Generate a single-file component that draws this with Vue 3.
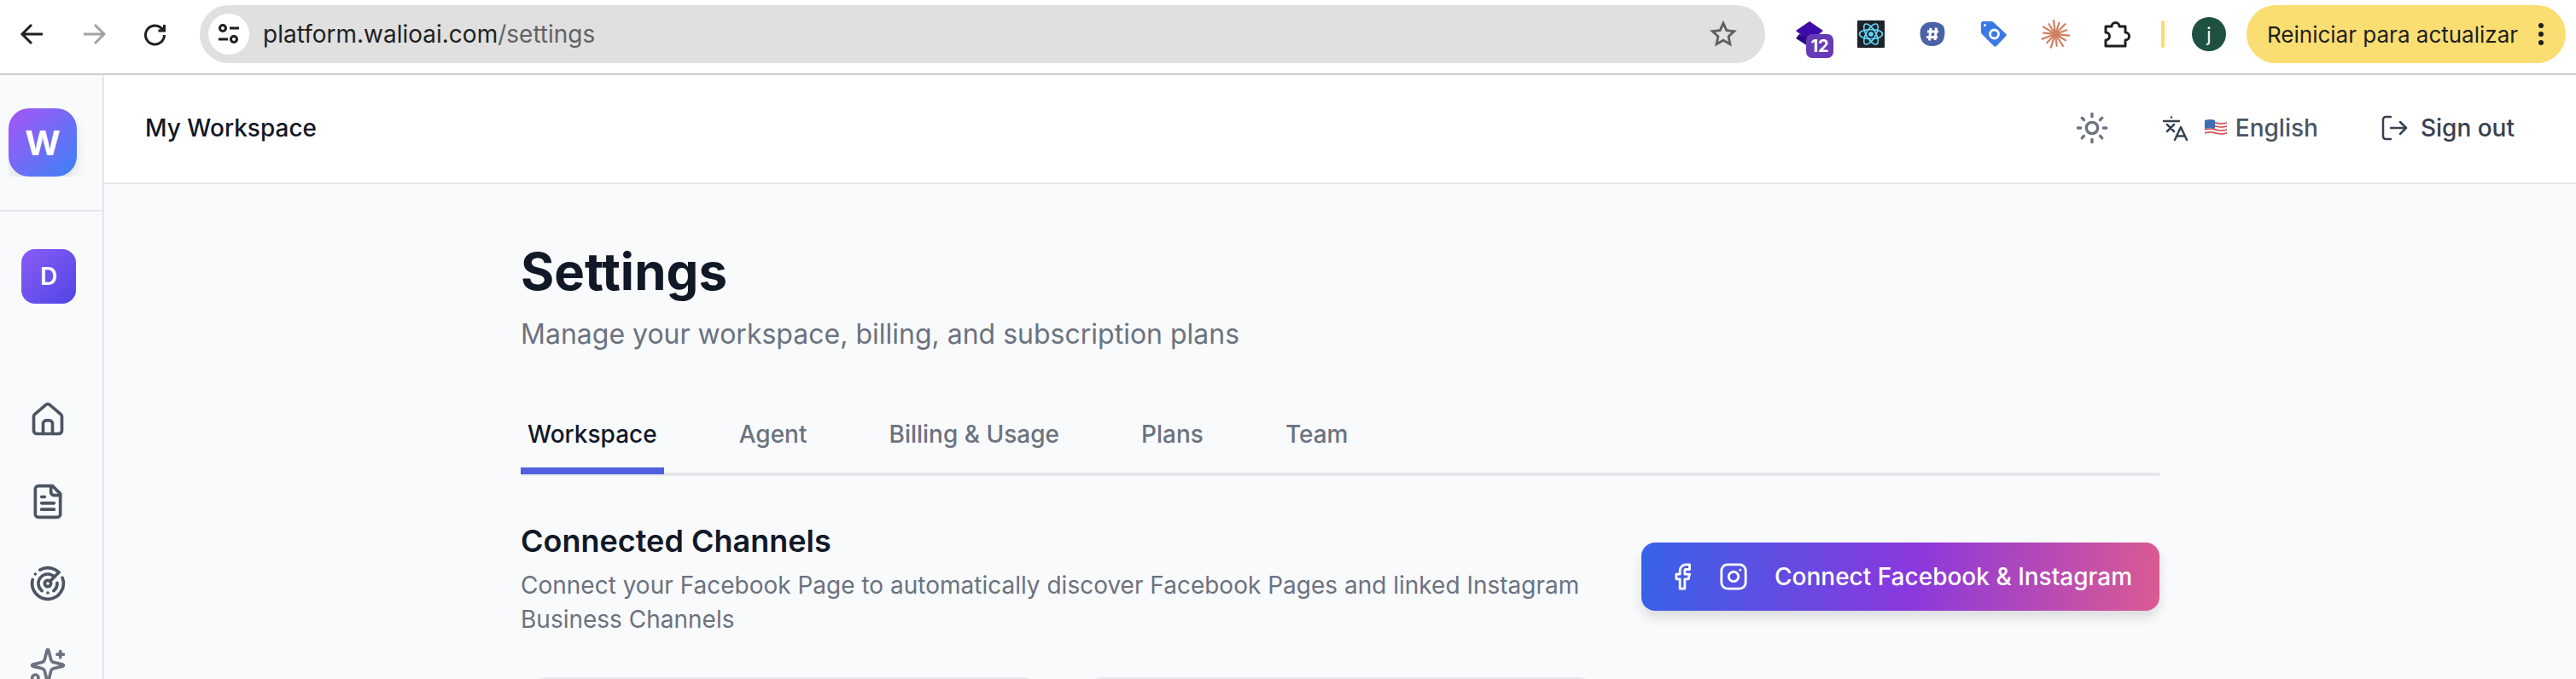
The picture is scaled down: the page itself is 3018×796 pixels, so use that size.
<template>
  <div class="page">
    <div class="chrome">
      <svg class="nav" width="32" height="32" viewBox="0 0 32 32"><path d="M28 16H5M15 5 4 16l11 11" /></svg>
      <svg class="nav off" width="32" height="32" viewBox="0 0 32 32"><path d="M4 16h23M17 5l11 11-11 11" /></svg>
      <svg class="nav" width="32" height="32" viewBox="0 0 32 32"><path d="M26.500 17a11 11 0 1 1-4-8.500l4 3.500M26.500 5v7h-7" /></svg>

      <div class="omnibox">
        <span class="tune">
          <svg width="28" height="28" viewBox="0 0 28 28"><circle cx="7" cy="7" r="3.500" /><path d="M15 7h11M2 20h11" /><circle cx="20" cy="20" r="3.500" /></svg>
        </span>
        <span class="url">platform.walioai.com<span class="url-path">/settings</span></span>
        <svg class="star" width="34" height="34" viewBox="0 0 24 24"><path d="m12 3 2.700 5.900 6.300.7-4.700 4.300 1.300 6.400-5.600-3.200-5.600 3.200 1.300-6.400L3 9.600l6.300-.7z" /></svg>
      </div>

      <div class="exts">
        <div class="ext">
          <svg width="36" height="30" viewBox="0 0 36 30"><path d="M18 0 34 11 18 24 2 11z" fill="#3f0ba8" /><path d="M6 15 2 20l14 9 8-6z" fill="#2a0a86" /></svg>
          <span class="ext-badge">12</span>
        </div>
        <div class="ext">
          <svg width="32" height="32" viewBox="0 0 32 32">
            <rect width="32" height="32" rx="1" fill="#20232a" />
            <g fill="none" stroke="#61dafb" stroke-width="1.600">
              <ellipse cx="16" cy="16" rx="13.500" ry="5.500" />
              <ellipse cx="16" cy="16" rx="13.500" ry="5.500" transform="rotate(60 16 16)" />
              <ellipse cx="16" cy="16" rx="13.500" ry="5.500" transform="rotate(120 16 16)" />
            </g>
            <circle cx="16" cy="16" r="2.800" fill="#61dafb" />
          </svg>
        </div>
        <div class="ext">
          <svg width="30" height="30" viewBox="0 0 30 30">
            <path d="M9 1.500C15 -.5 25 1 28 6c2.500 5 1.500 14-1.500 18-4 5-12 6-18 4C3 26 .5 20 .5 14 .5 8 3 3.500 9 1.500z" fill="#4a62a6" />
            <path d="M9 12h13M8 18.500h13M13 8l-1.500 14.500M19.500 7.500 18 22" fill="none" stroke="#fff" stroke-width="3" />
          </svg>
        </div>
        <div class="ext">
          <svg width="30" height="30" viewBox="0 0 30 30">
            <path d="M2 0h10c1 0 2 .5 3 1.500l14 13c1 1 1 2 0 3L18 29c-1 1-2 1-3 0L1 15c-.7-.7-1-1.500-1-2.500V2C0 1 1 0 2 0z" fill="#3b78e7" />
            <circle cx="4.500" cy="4.500" r="1.500" fill="#fff" />
            <circle cx="15.500" cy="15" r="5" fill="none" stroke="#fff" stroke-width="2.800" />
          </svg>
        </div>
        <div class="ext">
          <svg width="34" height="34" viewBox="-17 -17 34 34">
            <line v-for="ray in burstRays" :key="ray.id" :x1="ray.x1" :y1="ray.y1" :x2="ray.x2" :y2="ray.y2" stroke="#d07f60" stroke-width="2.200" stroke-linecap="round" />
            <circle r="4.500" fill="#d07f60" />
          </svg>
        </div>
        <div class="ext">
          <svg width="34" height="34" viewBox="0 0 34 34"><path d="M4 8h7a4.500 4.500 0 0 1 9 0h7v7a4.500 4.500 0 0 1 0 9v7H4v-7a4.500 4.500 0 0 0 0-9z" fill="none" stroke="#1f1f1f" stroke-width="3" stroke-linejoin="round" /></svg>
        </div>
      </div>
      <span class="ext-sep"></span>
      <span class="avatar">j</span>
      <div class="update">
        <span>Reiniciar para actualizar</span>
        <span class="dots"><i></i><i></i><i></i></span>
      </div>
    </div>

    <div class="app">
      <aside class="sidebar">
        <div class="side-top">
          <div class="logo-clip"><div class="logo">W</div></div>
        </div>
        <div class="workspace-badge">D</div>
        <nav class="side-nav">
          <svg viewBox="0 0 24 24"><path d="M3 10a2 2 0 0 1 .7-1.500l7-6a2 2 0 0 1 2.600 0l7 6A2 2 0 0 1 21 10v9a2 2 0 0 1-2 2H5a2 2 0 0 1-2-2z" /><path d="M15 21v-6.500a2 2 0 0 0-2-2h-2a2 2 0 0 0-2 2V21" /></svg>
          <svg viewBox="0 0 24 24"><path d="M15 2H6a2 2 0 0 0-2 2v16a2 2 0 0 0 2 2h12a2 2 0 0 0 2-2V7Z" /><path d="M14 2v4a2 2 0 0 0 2 2h4M10 9H8M16 13H8M16 17H8" /></svg>
          <svg viewBox="0 0 24 24"><path d="M19.070 4.930A10 10 0 0 0 6.990 3.340M4 6h.01M2.290 9.620A10 10 0 1 0 21.310 8.350M16.240 7.760A6 6 0 1 0 8.230 16.670M12 18h.01M17.990 11.660A6 6 0 0 1 15.770 16.670" /><circle cx="12" cy="12" r="2" /><path d="m13.410 10.590 5.660-5.660" /></svg>
          <svg class="soft" viewBox="0 0 24 24"><path d="M9.937 15.500A2 2 0 0 0 8.500 14.063l-6.135-1.582a.5.5 0 0 1 0-.962L8.500 9.936A2 2 0 0 0 9.937 8.500l1.582-6.135a.5.5 0 0 1 .963 0L14.063 8.500A2 2 0 0 0 15.500 9.937l6.135 1.581a.5.5 0 0 1 0 .964L15.500 14.063a2 2 0 0 0-1.437 1.437l-1.582 6.135a.5.5 0 0 1-.963 0z" /><path d="M20 3v4M22 5h-4" /><circle cx="4" cy="20" r="2" /></svg>
        </nav>
      </aside>

      <main class="main">
        <header class="topbar">
          <span class="ws-name">My Workspace</span>
          <div class="top-actions">
            <svg class="sun" width="40" height="40" viewBox="0 0 24 24"><circle cx="12" cy="12" r="4" /><path d="M12 2v2M12 20v2M4.900 4.900l1.400 1.400M17.700 17.700l1.400 1.400M2 12h2M20 12h2M6.300 17.700l-1.400 1.400M19.100 4.900l-1.400 1.400" /></svg>
            <div class="lang">
              <svg width="32" height="32" viewBox="0 0 32 32"><path d="M2 8h18M11 3.500h.01M6 12l8 8M14 12l-8 8M15 30l7-15 7 15M17.500 25.500h9" /></svg>
              <svg class="flag" width="26" height="20" viewBox="0 0 26 20">
                <path d="M0 1q6-2 13 0t13 0v17q-6 2-13 0t-13 0z" fill="#f4f4f4" />
                <path v-for="y in flagStripes" :key="y" :d="`M0 ${y}q6-2 13 0t13 0`" fill="none" stroke="#d8474a" stroke-width="1.500" />
                <path d="M0 1q6-2 12 0v10q-6-1.500-12 0z" fill="#3f6db5" />
              </svg>
              <span>English</span>
            </div>
            <div class="signout">
              <svg width="32" height="32" viewBox="0 0 32 32"><path d="M12 3H6a3 3 0 0 0-3 3v20a3 3 0 0 0 3 3h6M12 16h18M23 9l7 7-7 7" /></svg>
              <span>Sign out</span>
            </div>
          </div>
        </header>

        <div class="content">
          <h1>Settings</h1>
          <p class="sub">Manage your workspace, billing, and subscription plans</p>
          <div class="tabs">
            <span v-for="tab in tabs" :key="tab" class="tab" :class="{ active: tab === 'Workspace' }">{{ tab }}</span>
          </div>
          <section class="channels-head">
            <div class="channels-text">
              <h2>Connected Channels</h2>
              <p>Connect your Facebook Page to automatically discover Facebook Pages and linked Instagram Business Channels</p>
            </div>
            <button class="connect">
              <svg class="fb" width="34" height="34" viewBox="0 0 24 24"><path d="M18 2h-3a5 5 0 0 0-5 5v3H7v4h3v8h4v-8h3l1-4h-4V7a1 1 0 0 1 1-1h3z" /></svg>
              <svg width="34" height="34" viewBox="0 0 24 24"><rect x="2" y="2" width="20" height="20" rx="5" /><path d="M16 11.370A4 4 0 1 1 12.630 8 4 4 0 0 1 16 11.370zM17.500 6.500h.01" /></svg>
              <span>Connect Facebook &amp; Instagram</span>
            </button>
          </section>
          <div class="cards">
            <div class="card"></div>
            <div class="card"></div>
          </div>
        </div>
      </main>
    </div>
  </div>
</template>

<script setup>
const tabs = ['Workspace', 'Agent', 'Billing & Usage', 'Plans', 'Team']
const flagStripes = [4, 8, 12, 16]

const burstRays = Array.from({ length: 14 }, (_, i) => {
  const a = (i / 14) * Math.PI * 2 + 0.1
  const len = i % 2 ? 14 : 16.5
  return {
    id: i,
    x1: +(Math.cos(a) * 3).toFixed(2),
    y1: +(Math.sin(a) * 3).toFixed(2),
    x2: +(Math.cos(a) * len).toFixed(2),
    y2: +(Math.sin(a) * len).toFixed(2),
  }
})
</script>

<style>
html, body { margin: 0; background: #f9fafb; overflow: hidden; }
</style>

<style scoped>
* { box-sizing: border-box; }
.page { width: 3018px; height: 796px; overflow: hidden; font-family: Inter, "Liberation Sans", sans-serif; color: #111827; }

/* browser toolbar */
.chrome { height: 88px; background: #fff; border-bottom: 2px solid #cdcdcd; display: flex; align-items: center; padding: 0 12px 6px 22px; }
.nav { flex: none; margin-right: 40px; fill: none; stroke: #1f1f1f; stroke-width: 3; }
.nav.off { stroke: #a3a3a3; }
.omnibox { width: 1834px; height: 68px; margin-left: -4px; flex: none; background: #e0e0e0; border-radius: 34px; display: flex; align-items: center; padding: 0 32px 0 10px; }
.tune { width: 48px; height: 48px; border-radius: 50%; background: #fff; display: flex; align-items: center; justify-content: center; }
.tune svg { fill: none; stroke: #1f1f1f; stroke-width: 3; }
.url { margin-left: 16px; font-size: 28px; color: #1f1f1f; flex: 1; }
.url-path { color: #5f6368; }
.star { fill: none; stroke: #5f5f5f; stroke-width: 2; }
.exts { display: flex; margin-left: 16px; }
.ext { width: 72px; height: 72px; display: flex; align-items: center; justify-content: center; position: relative; }
.ext-badge { position: absolute; left: 32px; top: 36px; width: 32px; height: 28px; border-radius: 7px; background: #673ab7; color: #fff; font-size: 20px; font-weight: 700; display: flex; align-items: center; justify-content: center; }
.ext-sep { width: 4px; height: 32px; border-radius: 2px; background: #fbdc6c; margin-left: 16px; flex: none; }
.avatar { width: 40px; height: 40px; border-radius: 50%; background: #1e5142; color: #fff; font-size: 22px; display: flex; align-items: center; justify-content: center; margin-left: 32px; flex: none; }
.update { width: 374px; height: 68px; margin-left: 24px; flex: none; border-radius: 34px; background: #fade72; display: flex; align-items: center; padding-left: 24px; font-size: 26px; color: #1f1f1f; }
.dots { display: flex; flex-direction: column; gap: 4px; margin-left: 24px; }
.dots i { width: 6px; height: 6px; border-radius: 50%; background: #1f1f1f; }

.app { display: flex; height: 708px; }

/* left rail */
.sidebar { width: 122px; flex: none; background: #f9fafb; border-right: 2px solid #e5e7eb; }
.side-top { height: 160px; border-bottom: 2px solid #e5e7eb; padding: 39px 0 0 10px; }
.logo-clip { width: 94px; height: 80px; overflow: hidden; }
.logo { width: 80px; height: 80px; border-radius: 24px; background: linear-gradient(135deg, #a855f7, #3b82f6); color: #fff; font-size: 40px; font-weight: 700; display: flex; align-items: center; justify-content: center; box-shadow: 0 8px 14px rgba(0, 0, 0, .1); }
.workspace-badge { width: 64px; height: 64px; margin: 44px 0 0 25px; border-radius: 16px; background: linear-gradient(135deg, #8b5cf6, #4f46e5); color: #fff; font-size: 28px; font-weight: 600; display: flex; align-items: center; justify-content: center; }
.side-nav { display: flex; flex-direction: column; align-items: center; gap: 52px; margin-top: 114px; padding-right: 8px; }
.side-nav svg { width: 44px; height: 44px; flex: none; fill: none; stroke: #4b5563; stroke-width: 2; stroke-linecap: round; stroke-linejoin: round; }
.side-nav svg.soft { stroke: #6b7280; }

/* top bar */
.main { flex: 1; min-width: 0; }
.topbar { height: 128px; background: #fff; border-bottom: 2px solid #e5e7eb; display: flex; align-items: center; justify-content: space-between; padding: 0 72px 2px 48px; }
.ws-name { font-size: 28px; font-weight: 500; }
.top-actions { display: flex; align-items: center; font-size: 28px; font-weight: 500; color: #374151; }
.top-actions svg { fill: none; stroke-linecap: round; stroke-linejoin: round; }
.sun { stroke: #6b7280; stroke-width: 2; margin-right: 62px; }
.lang { display: flex; align-items: center; color: #4b5563; margin-right: 73px; }
.lang > svg:first-child { stroke: #374151; stroke-width: 2.500; }
.flag { margin: 0 10px 0 18px; }
.signout { display: flex; align-items: center; gap: 15px; }
.signout svg { stroke: #374151; stroke-width: 2.500; }

/* page body */
.content { width: 1920px; margin: 0 auto; }
h1 { margin: 66px 0 0; font-size: 60px; line-height: 72px; font-weight: 700; }
.sub { margin: 14px 0 0; font-size: 32px; line-height: 48px; color: #6b7280; }
.tabs { display: flex; gap: 80px; margin-top: 57px; border-bottom: 4px solid #e5e7eb; height: 85px; }
.tab { padding: 0 8px; height: 83px; line-height: 72px; font-size: 28px; font-weight: 500; color: #6b7280; }
.tab.active { color: #111827; border-bottom: 8px solid #4f5fe0; }
.channels-head { display: flex; justify-content: space-between; align-items: flex-start; margin-top: 52px; }
.channels-text { width: 1260px; }
h2 { margin: 0; font-size: 36px; line-height: 48px; font-weight: 600; }
.channels-text p { margin: 8px 0 0; font-size: 28px; line-height: 40px; color: #6b7280; }
.connect { width: 607px; height: 80px; margin-top: 26px; flex: none; border: 0; border-radius: 16px; background: linear-gradient(95deg, #3762e8, #8a38dd 52%, #dc5a92); color: #fff; font: 500 28px Inter, sans-serif; display: flex; align-items: center; padding: 0 0 0 36px; gap: 21px; box-shadow: 0 8px 14px rgba(0, 0, 0, .12); }
.connect svg { flex: none; fill: none; stroke: #fff; stroke-width: 2; stroke-linecap: round; stroke-linejoin: round; }
.connect .fb { margin-left: -5px; margin-right: 5px; }
.connect span { margin-left: 10px; }
.cards { display: grid; grid-template-columns: repeat(3, 1fr); gap: 32px; margin-top: 48px; }
.card { height: 200px; background: #fff; border: 2px solid #e5e7eb; border-radius: 32px; }
</style>
